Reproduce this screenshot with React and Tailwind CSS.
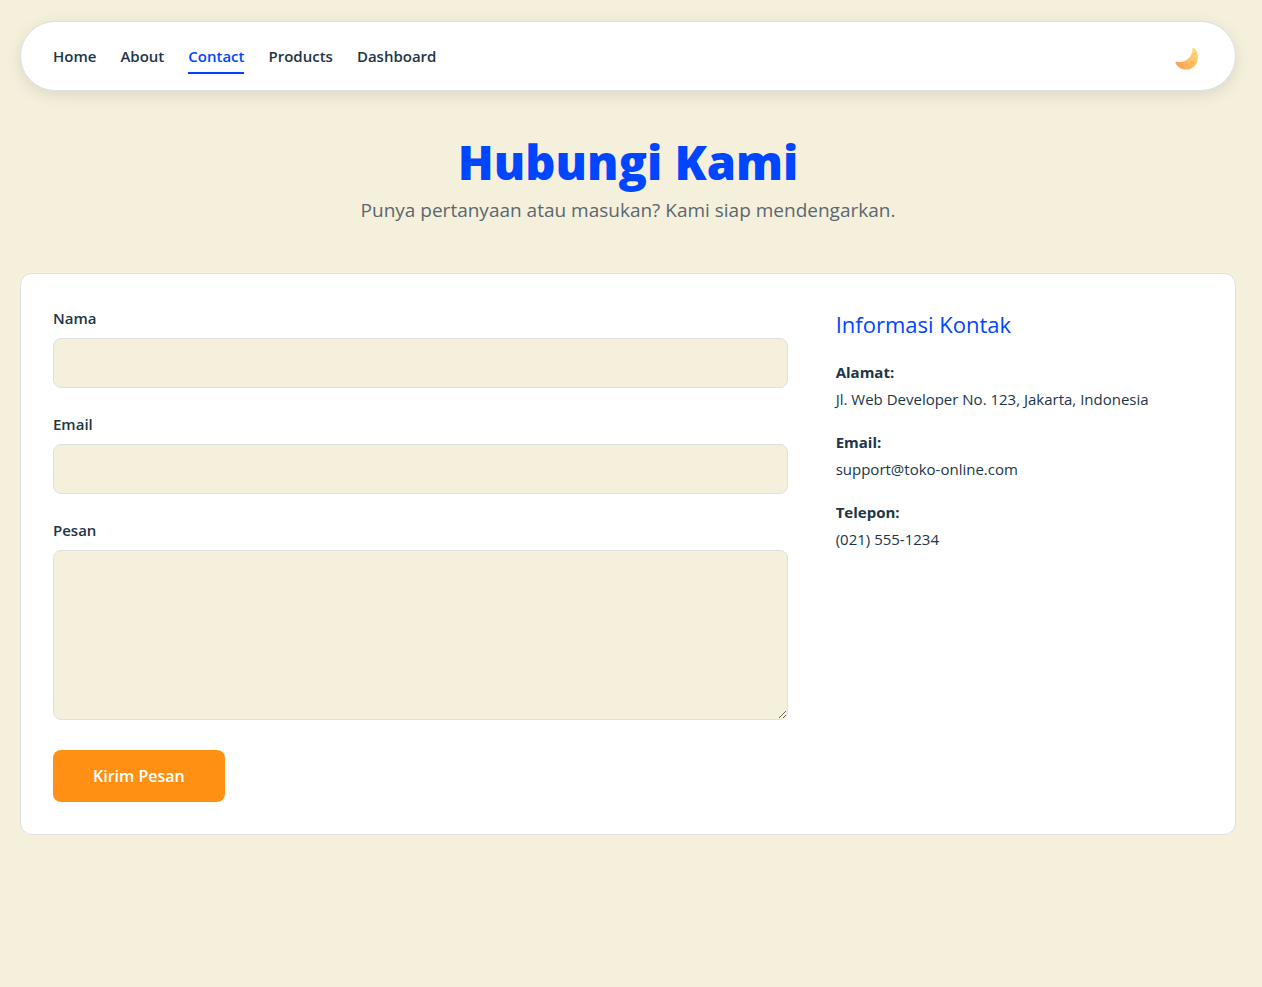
import React from "react";

const links = ["Home", "About", "Contact", "Products", "Dashboard"];

const contactDetails = [
  { label: "Alamat:", value: "Jl. Web Developer No. 123, Jakarta, Indonesia" },
  { label: "Email:", value: "support@toko-online.com" },
  { label: "Telepon:", value: "(021) 555-1234" },
];

const fieldClass =
  "block w-full rounded-lg border border-[#dfe0e2] bg-[#f5f0dc] px-4 text-base text-[#213547] outline-none focus:border-[#0046ff]";

function MoonIcon() {
  return (
    <svg viewBox="0 0 24 24" className="size-6" aria-hidden="true">
      <defs>
        <linearGradient id="moon" x1="0.1" y1="0.9" x2="0.9" y2="0.2">
          <stop offset="0" stopColor="#fa9f50" />
          <stop offset="0.5" stopColor="#ffbd5e" />
          <stop offset="1" stopColor="#ffd77c" />
        </linearGradient>
      </defs>
      <path
        d="M17.4 1.2C17.700.6 18.500.7 19.100 1.300c2.700 2.200 4.100 5.200 4 8.900C22.900 17.400 18 22.600 11.600 22.600 6.800 22.600 2.700 20.200.6 16.200c-.4-.9.100-1.600 1-1.400 2.900.6 6.200.4 9.400-1.500 4.400-2.700 6.800-7 6.400-12.100Z"
        fill="url(#moon)"
      />
      <g fill="#f2a04a" opacity="0.55">
        <circle cx="17" cy="15.200" r="1.500" />
        <circle cx="20" cy="7" r="1" />
        <circle cx="11.500" cy="17.500" r="1.100" />
        <circle cx="20.200" cy="11.800" r="0.800" />
        <circle cx="6.800" cy="17.400" r="0.800" />
      </g>
    </svg>
  );
}

function Navbar() {
  return (
    <nav className="flex h-[70px] items-center justify-between rounded-full border border-[#dfe0e2] bg-white pl-8 pr-9 shadow-[0_4px_15px_rgba(0,0,0,0.1)]">
      <ul className="flex gap-6">
        {links.map((link) => (
          <li key={link}>
            <a
              href="#"
              className={
                link === "Contact"
                  ? "block border-b-2 border-[#0046ff] pt-1 pb-0.5 text-[15px] leading-7 font-semibold text-[#0046ff]"
                  : "block border-b-2 border-transparent pt-1 pb-0.5 text-[15px] leading-7 font-semibold"
              }
            >
              {link}
            </a>
          </li>
        ))}
      </ul>
      <button type="button" aria-label="Toggle dark mode" className="pt-1.5">
        <MoonIcon />
      </button>
    </nav>
  );
}

function Field({ id, label, children }) {
  return (
    <div className="mb-6">
      <label htmlFor={id} className="mb-2 block text-[15px] leading-6 font-semibold">
        {label}
      </label>
      {children}
    </div>
  );
}

export default function App() {
  return (
    <div className="min-h-screen bg-[#f5f0dc] pt-[21px] pr-[26px] pb-12 pl-5 font-['Open_Sans','Noto_Sans',sans-serif] text-[#213547]">
      <Navbar />
      <main>
        <header className="pt-10 pb-[46px] text-center">
          <h1 className="text-[47px] leading-[62px] font-extrabold text-[#0046ff]">Hubungi Kami</h1>
          <p className="text-[19px] leading-[34px] text-[#5b6770]">
            Punya pertanyaan atau masukan? Kami siap mendengarkan.
          </p>
        </header>
        <section className="grid grid-cols-[2fr_1fr] gap-12 rounded-xl border border-[#dfe0e2] bg-white p-8">
          <form onSubmit={(e) => e.preventDefault()}>
            <Field id="nama" label="Nama">
              <input id="nama" type="text" className={`${fieldClass} h-[50px]`} />
            </Field>
            <Field id="email" label="Email">
              <input id="email" type="email" className={`${fieldClass} h-[50px]`} />
            </Field>
            <Field id="pesan" label="Pesan">
              <textarea id="pesan" className={`${fieldClass} h-[170px] resize-y py-3`} />
            </Field>
            <button
              type="submit"
              className="mt-1.5 h-[52px] rounded-lg bg-[#ff9013] px-10 text-base font-semibold text-white"
            >
              Kirim Pesan
            </button>
          </form>
          <aside>
            <h2 className="mb-4 text-[22px] leading-[37px] text-[#0046ff]">Informasi Kontak</h2>
            <dl className="flex flex-col gap-4 text-[15px] leading-[27px]">
              {contactDetails.map(({ label, value }) => (
                <div key={label}>
                  <dt className="font-bold">{label}</dt>
                  <dd>{value}</dd>
                </div>
              ))}
            </dl>
          </aside>
        </section>
      </main>
    </div>
  );
}
